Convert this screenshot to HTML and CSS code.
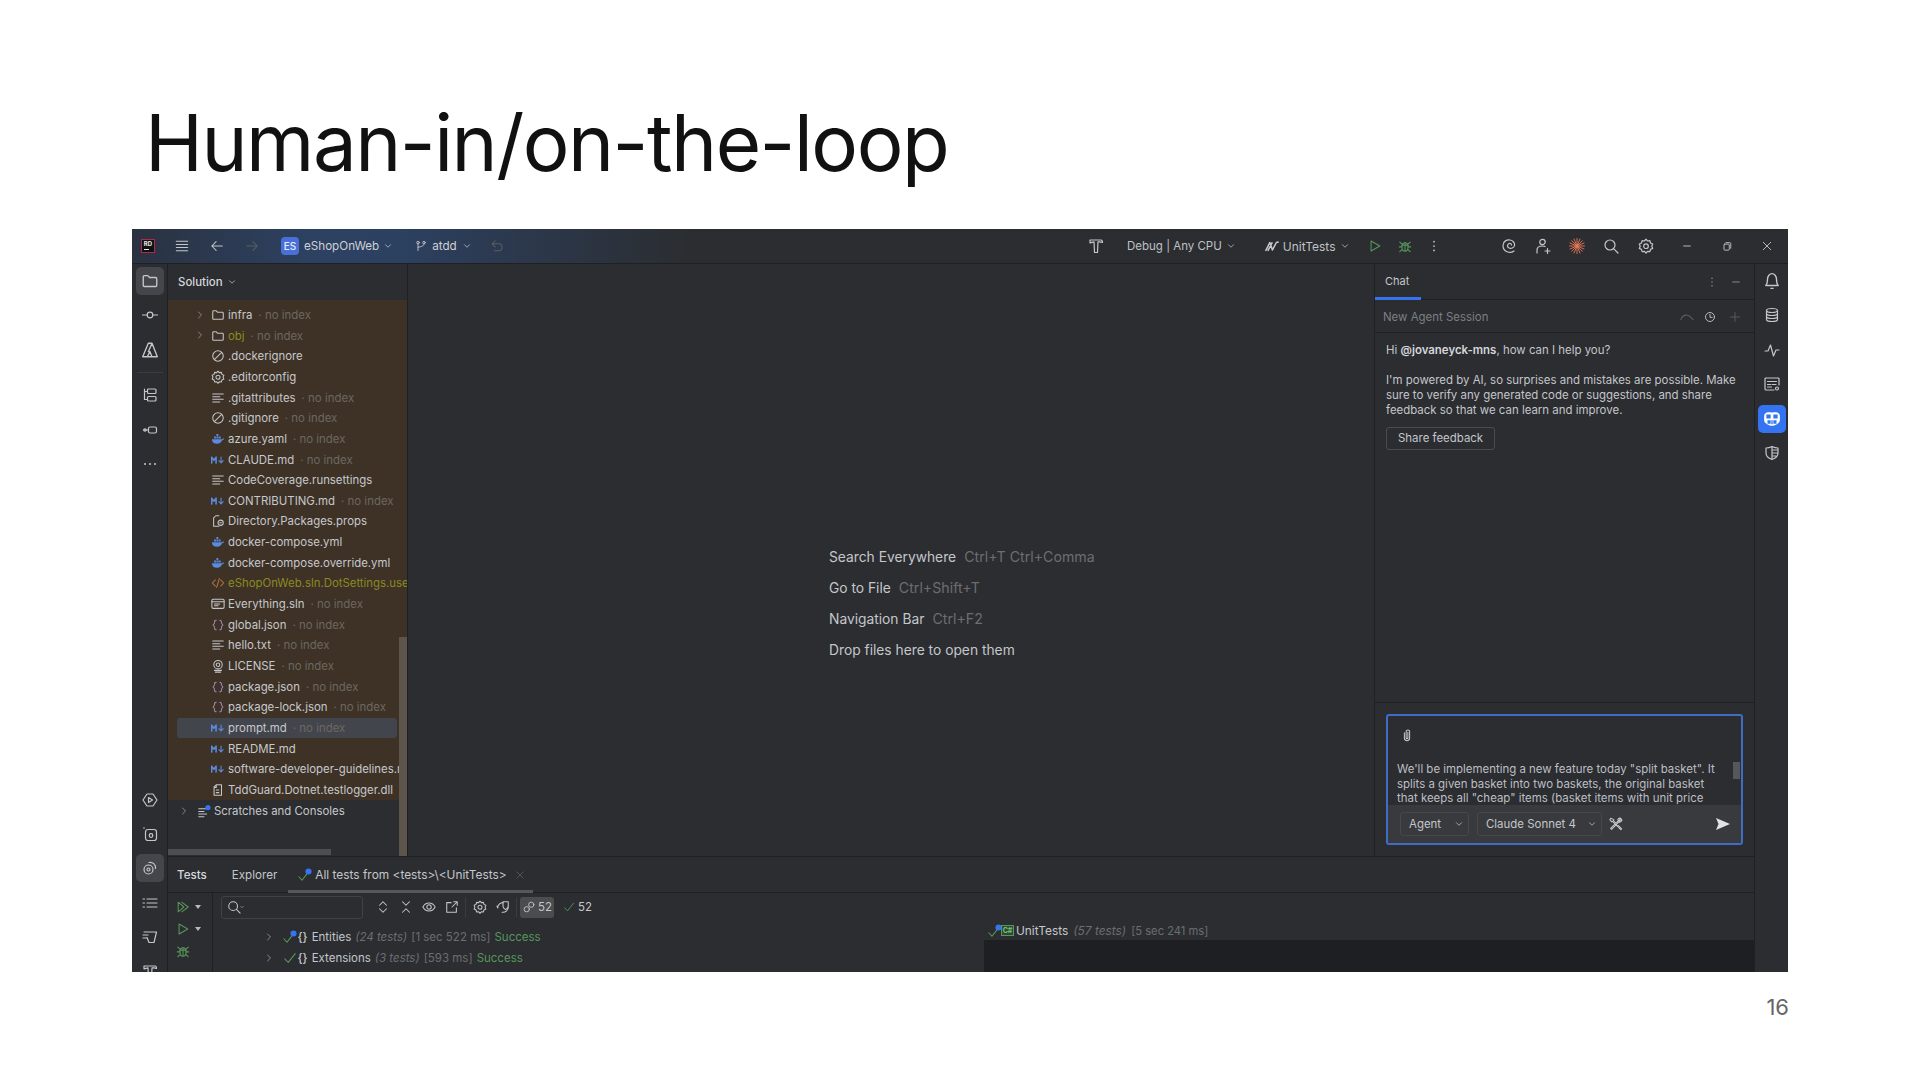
FILE: index.html
```html
<!DOCTYPE html>
<html lang="en">
<head>
<meta charset="utf-8">
<title>Human-in/on-the-loop</title>
<link rel="stylesheet" href="styles.css">
</head>
<body>
<svg class="defs" width="0" height="0" aria-hidden="true">
  <symbol id="folder" viewBox="0 0 16 16"><path d="M2 4.200q0-1 1-1h3l1.600 1.700H13q1 0 1 1v6q0 1-1 1H3q-1 0-1-1z"/></symbol>
  <symbol id="chev-r" viewBox="0 0 16 16"><path d="M6 4l4 4-4 4"/></symbol>
  <symbol id="chev-d" viewBox="0 0 16 16"><path d="M4 6l4 4 4-4"/></symbol>
  <symbol id="ban" viewBox="0 0 16 16"><circle cx="8" cy="8" r="6"/><path d="M3.800 12.200l8.400-8.400"/></symbol>
  <symbol id="gear" viewBox="0 0 16 16"><path d="M8 1.200l1.500 1.800 2.400-.3.600 2.300 2.200 1-.9 2.200.9 2.200-2.200 1-.6 2.300-2.400-.3L8 15.200l-1.500-1.800-2.400.3-.6-2.300-2.200-1 .9-2.200-.9-2.200 2.200-1 .6-2.300 2.400.3z"/><circle cx="8" cy="8.200" r="2.300"/></symbol>
  <symbol id="lines" viewBox="0 0 16 16"><path d="M2 3.500h12M2 6.500h8M2 9.500h12M2 12.500h8"/></symbol>
  <symbol id="lines-b" viewBox="0 0 16 16"><path d="M2 5.500h9M2 8.500h6M2 11.500h9M2 14.500h6"/><circle class="dot" cx="12.500" cy="4" r="3"/></symbol>
  <symbol id="docker" viewBox="0 0 16 16"><path class="solid" d="M1 8.200h11.600c.5-.9 1.400-1 2.400-.8-.4 1.500-1.400 2.100-2.400 2.100-.8 2.600-2.800 4-5.600 4-3.800 0-5.800-2-6-5.300z"/><path class="solid" d="M3.500 5.200h2.200v2.300H3.500zM6.200 5.200h2.200v2.300H6.200zM6.200 2.400h2.200v2.300H6.200zM8.900 5.200h2.200v2.300H8.900z"/></symbol>
  <symbol id="md" viewBox="0 0 16 16"><path class="thick" d="M.8 11.500V4.800l2.500 3.400 2.500-3.400v6.700"/><path d="M11.500 4.500v6.800M9 8.800l2.500 2.600L14 8.800"/></symbol>
  <symbol id="props" viewBox="0 0 16 16"><path d="M9 2H5.500L3 4.500V14h6"/><circle cx="11" cy="10" r="3"/><path d="M10 10h2"/></symbol>
  <symbol id="xml" viewBox="0 0 16 16"><path d="M5 4.500L1.500 8 5 11.500M11 4.500L14.500 8 11 11.500M9.500 3l-3 10"/></symbol>
  <symbol id="sln" viewBox="0 0 16 16"><rect x="1" y="2.500" width="14" height="10.500" rx="1.500"/><path d="M1 5.500h14M4 8h6M4 10h4"/></symbol>
  <symbol id="json" viewBox="0 0 16 16"><path d="M6 2.500c-2 0-2 1-2 2.500 0 1.500-1 2-1.500 3 .5 1 1.500 1.500 1.500 3s0 2.500 2 2.500M10 2.500c2 0 2 1 2 2.500 0 1.500 1 2 1.500 3-.5 1-1.500 1.500-1.500 3s0 2.500-2 2.500"/></symbol>
  <symbol id="license" viewBox="0 0 16 16"><circle cx="8" cy="6.500" r="4.800"/><circle cx="8" cy="6.500" r="2"/><path d="M4 13h8M5 15h6"/></symbol>
  <symbol id="dll" viewBox="0 0 16 16"><path d="M6 2h6v12H3.500V4.500zM6 2v3H3.500M6 8h3M6 11h3"/></symbol>
  <symbol id="commit" viewBox="0 0 16 16"><circle cx="8" cy="8" r="2.800"/><path d="M.5 8h4.700M10.800 8h4.700"/></symbol>
  <symbol id="azure" viewBox="0 0 16 16"><path d="M6.500 2h3.300l4.700 12H9.700L8 9.500 5.500 14H1.500zM9.800 2L6.500 9.500h1.500M5.500 14h9"/></symbol>
  <symbol id="struct" viewBox="0 0 16 16"><rect x="5.500" y="2" width="8.500" height="4.500" rx="1"/><rect x="5.500" y="9.500" width="8.500" height="4.500" rx="1"/><path d="M2.500 2v10.500h3M2.500 4.500h3"/></symbol>
  <symbol id="plug" viewBox="0 0 16 16"><rect x="6.500" y="5" width="8" height="6" rx="1.500"/><path d="M1.500 8h5"/><circle cx="3" cy="8" r="1.200"/></symbol>
  <symbol id="dots" viewBox="0 0 16 16"><circle class="solid" cx="3" cy="8" r="1"/><circle class="solid" cx="8" cy="8" r="1"/><circle class="solid" cx="13" cy="8" r="1"/></symbol>
  <symbol id="vdots" viewBox="0 0 16 16"><circle class="solid" cx="8" cy="3" r="1"/><circle class="solid" cx="8" cy="8" r="1"/><circle class="solid" cx="8" cy="13" r="1"/></symbol>
  <symbol id="hexrun" viewBox="0 0 16 16"><path d="M5 2h6l4 6-4 6H5L1 8z"/><path d="M6.500 5.500l4 2.500-4 2.500z"/></symbol>
  <symbol id="cam" viewBox="0 0 16 16"><rect x="3.500" y="3.500" width="11" height="11" rx="2.500"/><circle cx="9" cy="9.500" r="1.800"/><circle class="solid" cx="2" cy="2" r=".8"/></symbol>
  <symbol id="svc" viewBox="0 0 16 16"><circle cx="6.500" cy="9.500" r="4.500"/><circle cx="6.500" cy="9.500" r="1.500"/><path d="M7 2.500c3.500-1 7 2 6.500 6"/></symbol>
  <symbol id="list" viewBox="0 0 16 16"><path d="M5 4h10M5 8h10M5 12h10M1 4h1.500M1 8h1.500M1 12h1.500"/></symbol>
  <symbol id="todo" viewBox="0 0 16 16"><path d="M2 3h12.500l-2.500 10.500H7L5 8.500M1 6h5M1 9h3"/></symbol>
  <symbol id="hammer" viewBox="0 0 16 16"><path d="M2 2h11c1 0 1.500 1 1.500 2.500L12 3.800H10l-.5 10.700h-3L6 3.800 2 4.800z"/></symbol>
  <symbol id="menu" viewBox="0 0 16 16"><path d="M1.500 2.500h13M1.500 6.200h13M1.500 9.800h13M1.500 13.500h13"/></symbol>
  <symbol id="left" viewBox="0 0 16 16"><path d="M14 8H2.500M7 3L2 8l5 5"/></symbol>
  <symbol id="right" viewBox="0 0 16 16"><path d="M2 8h11.500M9 3l5 5-5 5"/></symbol>
  <symbol id="branch" viewBox="0 0 16 16"><circle cx="4" cy="3.500" r="1.700"/><circle cx="12" cy="3.500" r="1.700"/><path d="M4 5.200V14M12 5.200c0 3-3 3.500-8 4.500"/></symbol>
  <symbol id="undo" viewBox="0 0 16 16"><path d="M6 2L2.500 5.500 6 9M2.500 5.500H10c5 0 5 8 0 8H5"/></symbol>
  <symbol id="play" viewBox="0 0 16 16"><path d="M3.500 2.200L13.500 8l-10 5.800z"/></symbol>
  <symbol id="bug" viewBox="0 0 16 16"><ellipse cx="8" cy="9" rx="3.500" ry="4.800"/><path d="M4.500 7h7M1.500 9h3M11.500 9h3M2 3.500l3 2.500M14 3.500l-3 2.500M2 14.500l3-2.500M14 14.500l-3-2.500M8 4V14"/></symbol>
  <symbol id="spiral" viewBox="0 0 16 16"><path d="M13 13c-4 3-11 1-11-5.500C2 3 6 1.500 9 2c3 .5 5 3 4.500 5.500C13 10 10 11 8 10c-2-1-2-3.500 0-4.500 1.500-.5 2.500.5 2.500 1.500"/></symbol>
  <symbol id="person" viewBox="0 0 16 16"><circle cx="7.500" cy="4" r="2.700"/><path d="M2 15v-3c0-3 3-4 5.500-4 1 0 2 .2 2.500.5M12.500 10.500v5M10 13h5"/></symbol>
  <symbol id="star" viewBox="0 0 16 16"><path class="orange" d="M8 .5v15M.5 8h15M2.700 2.700l10.600 10.600M13.300 2.700L2.700 13.300M5 1l6 14M11 1L5 15M1 5l14 6M15 5L1 11"/></symbol>
  <symbol id="search" viewBox="0 0 16 16"><circle cx="7" cy="7" r="5"/><path d="M10.800 10.800L15 15"/></symbol>
  <symbol id="min" viewBox="0 0 16 16"><path d="M3.500 8h9"/></symbol>
  <symbol id="restore" viewBox="0 0 16 16"><rect x="4" y="5.500" width="7" height="8" rx="1"/><path d="M6.500 3.500h5q1.500 0 1.500 1.500v6"/></symbol>
  <symbol id="close" viewBox="0 0 16 16"><path d="M3 3l10 10M13 3L3 13"/></symbol>
  <symbol id="bell" viewBox="0 0 16 16"><path d="M2.500 12c1.500-1.500 1.500-3 1.500-5.500C4 3.500 6 1.500 8 1.500s4 2 4 5c0 2.500 0 4 1.500 5.500zM7 14.500h2"/></symbol>
  <symbol id="db" viewBox="0 0 16 16"><ellipse cx="8" cy="3.500" rx="5.500" ry="2"/><path d="M2.500 3.500v9c0 1.200 2.500 2 5.500 2s5.500-.8 5.500-2v-9M2.500 6.500c0 1.200 2.500 2 5.500 2s5.500-.8 5.500-2M2.500 9.500c0 1.200 2.500 2 5.500 2s5.500-.8 5.500-2"/></symbol>
  <symbol id="pulse" viewBox="0 0 16 16"><path d="M1 9h3l2.500-6 3 11L12 8h3"/></symbol>
  <symbol id="code" viewBox="0 0 16 16"><path d="M15 9V3q0-1-1-1H2q-1 0-1 1v10q0 1 1 1h8M3.500 5.500h9M3.500 8.500h3M8 8.500h4M3.500 11h4"/><circle cx="13" cy="12.500" r="1.500"/></symbol>
  <symbol id="copilot" viewBox="0 0 16 16"><path class="white" d="M4.500 2h2.500c.5 0 1 .5 1 1 0-.5.500-1 1-1h2.500C13.500 2 15 3.500 15 5.500v3.700c0 1-.5 2-1.800 2.800C11.500 13.500 9.500 14 8 14s-3.500-.5-5.200-2C1.500 11.200 1 10.200 1 9.200V5.500C1 3.500 2.500 2 4.500 2z"/><path class="hole" d="M3 4h3.800v3.500H3zM9.200 4H13v3.500H9.200zM4 9.200h2.800v3H4zM9.200 9.200H12v3H9.200zM7.400 9.200h1.200v3.500H7.400z"/></symbol>
  <symbol id="shield" viewBox="0 0 16 16"><path d="M8 1.500c2 1 4 1.500 6 1.500v5c0 3.500-3 5.500-6 6.500-3-1-6-3-6-6.500V3c2 0 4-.5 6-1.500zM8 1.500v13M8 5h6M8 8h5.800M8 11h4"/></symbol>
  <symbol id="wave" viewBox="0 0 16 16"><path class="thick" d="M1 13L5.500 4l3 8.500L13 4l2-.5M3.500 13L8 4.500"/></symbol>
  <symbol id="clock" viewBox="0 0 16 16"><circle cx="8" cy="8" r="6"/><path d="M8 4.500V8.500h3"/></symbol>
  <symbol id="plus" viewBox="0 0 16 16"><path d="M8 2v12M2 8h12"/></symbol>
  <symbol id="redo" viewBox="0 0 16 16"><path d="M1 11c2-6 8-7 12-2l2 2"/></symbol>
  <symbol id="clip" viewBox="0 0 16 16"><path d="M5 5.500V11.500c0 4 6 4 6 0V4.500c0-3-4-3-4 0v7c0 1 2 1 2 0V5"/></symbol>
  <symbol id="tools" viewBox="0 0 16 16"><path d="M2 1.500L1 3l2 2.500L4 5l9.500 9.500 1-1L5 4l.5-1zM14.500 2.500L12 5l-1-1 2.500-2.500c-2-.8-4 1-3.200 3.200L1.800 13l1.200 1.200 8.300-8.500c2.200.8 4-1.200 3.200-3.200z"/></symbol>
  <symbol id="send" viewBox="0 0 16 16"><path class="light" d="M1 2l14 6-14 6 2.500-6z"/></symbol>
  <symbol id="dplay" viewBox="0 0 16 16"><path d="M2.500 2.500L9 8l-6.500 5.500zM6.500 2.500L14 8l-7.500 5.500"/></symbol>
  <symbol id="updown" viewBox="0 0 16 16"><path d="M4 6l4-4 4 4M4 10l4 4 4-4"/></symbol>
  <symbol id="collapse" viewBox="0 0 16 16"><path d="M4 2l4 4 4-4M4 14l4-4 4 4"/></symbol>
  <symbol id="eye" viewBox="0 0 16 16"><path d="M1 8c3-6 11-6 14 0-3 6-11 6-14 0z"/><circle cx="8" cy="8" r="2.500"/></symbol>
  <symbol id="export" viewBox="0 0 16 16"><path d="M7 3H2v11h11V9M8 8l6-6M10 2h4v4"/></symbol>
  <symbol id="hist" viewBox="0 0 16 16"><path d="M2 9a6 6 0 0 1 6-6M2 9l-1-2M14 8a6 6 0 0 1-7 6"/><path d="M8 2h6v5c0 2-1.500 3-3 4-1.500-1-3-2-3-4z"/></symbol>
  <symbol id="check" viewBox="0 0 16 16"><path d="M2 9l4 4 8-10"/></symbol>
  <symbol id="check-b" viewBox="0 0 16 16"><path d="M1 10l3.500 4L10 7"/><circle class="dot" cx="12" cy="4" r="3.500"/></symbol>
  <symbol id="link" viewBox="0 0 16 16"><circle cx="5" cy="11" r="3.500"/><circle cx="11" cy="5" r="3.500"/></symbol>
</svg>

<div class="slide">
  <header class="title-area"><h1 class="title">Human-in/on-the-loop</h1></header>

  <div class="ide">
    <div class="titlebar">
      <div class="tb-left">
        <span class="rd-logo">RD<i></i></span>
        <svg class="ic i14 c-main tb-menu"><use href="#menu"/></svg>
        <svg class="ic i14 c-main"><use href="#left"/></svg>
        <svg class="ic i14 c-off"><use href="#right"/></svg>
        <span class="proj"><b class="es">ES</b>eShopOnWeb<svg class="ic i10 c-main"><use href="#chev-d"/></svg></span>
        <span class="branch"><svg class="ic i12 c-main"><use href="#branch"/></svg>atdd<svg class="ic i10 c-main"><use href="#chev-d"/></svg></span>
        <svg class="ic i14 c-off tb-undo"><use href="#undo"/></svg>
      </div>
      <div class="tb-right">
        <svg class="ic i16 c-main"><use href="#hammer"/></svg>
        <span class="tb-debug">Debug | Any CPU<svg class="ic i10 c-main"><use href="#chev-d"/></svg></span>
        <span class="tb-run"><svg class="ic i14 c-main"><use href="#wave"/></svg>UnitTests<svg class="ic i10 c-main"><use href="#chev-d"/></svg></span>
        <svg class="ic i14 c-green tb-play"><use href="#play"/></svg>
        <svg class="ic i14 c-green tb-bug"><use href="#bug"/></svg>
        <svg class="ic i14 c-main tb-dots"><use href="#vdots"/></svg>
        <svg class="ic i16 c-main tb-spiral"><use href="#spiral"/></svg>
        <svg class="ic i16 c-main tb-gap"><use href="#person"/></svg>
        <svg class="ic i16 tb-gap"><use href="#star"/></svg>
        <svg class="ic i16 c-main tb-gap"><use href="#search"/></svg>
        <svg class="ic i16 c-main tb-gear"><use href="#gear"/></svg>
        <svg class="ic i12 c-main tb-min"><use href="#min"/></svg>
        <svg class="ic i12 c-main tb-res"><use href="#restore"/></svg>
        <svg class="ic i12 c-main tb-res"><use href="#close"/></svg>
      </div>
    </div>

    <div class="ide-body">
      <nav class="stripe">
        <div class="st-group">
          <span class="st-btn on"><svg class="ic i18 c-main"><use href="#folder"/></svg></span>
          <span class="st-btn"><svg class="ic i16 c-main"><use href="#commit"/></svg></span>
          <span class="st-btn"><svg class="ic i18 c-main"><use href="#azure"/></svg></span>
          <hr class="st-sep">
          <span class="st-btn"><svg class="ic i16 c-main"><use href="#struct"/></svg></span>
          <span class="st-btn"><svg class="ic i16 c-main"><use href="#plug"/></svg></span>
          <span class="st-btn"><svg class="ic i16 c-main"><use href="#dots"/></svg></span>
        </div>
        <div class="st-group st-bottom">
          <span class="st-btn"><svg class="ic i16 c-main"><use href="#hexrun"/></svg></span>
          <span class="st-btn"><svg class="ic i16 c-main"><use href="#cam"/></svg></span>
          <span class="st-btn on"><svg class="ic i16 c-main"><use href="#svc"/></svg></span>
          <span class="st-btn"><svg class="ic i16 c-main"><use href="#list"/></svg></span>
          <span class="st-btn"><svg class="ic i16 c-main"><use href="#todo"/></svg></span>
          <span class="st-btn"><svg class="ic i16 c-main"><use href="#hammer"/></svg></span>
        </div>
      </nav>

      <div class="center">
        <div class="upper">
          <aside class="project">
            <div class="proj-head">Solution<svg class="ic i10 c-main"><use href="#chev-d"/></svg></div>
            <div class="tree-wrap">
              <div class="tree">
                <div class="row"><svg class="ic i12 c-dim tw"><use href="#chev-r"/></svg><svg class="ic i14 c-main"><use href="#folder"/></svg><span>infra</span><em>· no index</em></div>
                <div class="row"><svg class="ic i12 c-dim tw"><use href="#chev-r"/></svg><svg class="ic i14 c-main"><use href="#folder"/></svg><span class="ign">obj</span><em>· no index</em></div>
                <div class="row"><svg class="ic i14 c-main"><use href="#ban"/></svg><span>.dockerignore</span></div>
                <div class="row"><svg class="ic i14 c-main"><use href="#gear"/></svg><span>.editorconfig</span></div>
                <div class="row"><svg class="ic i14 c-main"><use href="#lines"/></svg><span>.gitattributes</span><em>· no index</em></div>
                <div class="row"><svg class="ic i14 c-main"><use href="#ban"/></svg><span>.gitignore</span><em>· no index</em></div>
                <div class="row"><svg class="ic i14 c-blue"><use href="#docker"/></svg><span>azure.yaml</span><em>· no index</em></div>
                <div class="row"><svg class="ic i14 c-blue"><use href="#md"/></svg><span>CLAUDE.md</span><em>· no index</em></div>
                <div class="row"><svg class="ic i14 c-main"><use href="#lines"/></svg><span>CodeCoverage.runsettings</span></div>
                <div class="row"><svg class="ic i14 c-blue"><use href="#md"/></svg><span>CONTRIBUTING.md</span><em>· no index</em></div>
                <div class="row"><svg class="ic i14 c-main"><use href="#props"/></svg><span>Directory.Packages.props</span></div>
                <div class="row"><svg class="ic i14 c-blue"><use href="#docker"/></svg><span>docker-compose.yml</span></div>
                <div class="row"><svg class="ic i14 c-blue"><use href="#docker"/></svg><span>docker-compose.override.yml</span></div>
                <div class="row"><svg class="ic i14 c-orange"><use href="#xml"/></svg><span class="ign">eShopOnWeb.sln.DotSettings.user</span></div>
                <div class="row"><svg class="ic i14 c-main"><use href="#sln"/></svg><span>Everything.sln</span><em>· no index</em></div>
                <div class="row"><svg class="ic i14 c-purple"><use href="#json"/></svg><span>global.json</span><em>· no index</em></div>
                <div class="row"><svg class="ic i14 c-main"><use href="#lines"/></svg><span>hello.txt</span><em>· no index</em></div>
                <div class="row"><svg class="ic i14 c-main"><use href="#license"/></svg><span>LICENSE</span><em>· no index</em></div>
                <div class="row"><svg class="ic i14 c-purple"><use href="#json"/></svg><span>package.json</span><em>· no index</em></div>
                <div class="row"><svg class="ic i14 c-purple"><use href="#json"/></svg><span>package-lock.json</span><em>· no index</em></div>
                <div class="row sel"><svg class="ic i14 c-blue"><use href="#md"/></svg><span>prompt.md</span><em>· no index</em></div>
                <div class="row"><svg class="ic i14 c-blue"><use href="#md"/></svg><span>README.md</span></div>
                <div class="row"><svg class="ic i14 c-blue"><use href="#md"/></svg><span>software-developer-guidelines.md</span></div>
                <div class="row"><svg class="ic i14 c-main"><use href="#dll"/></svg><span>TddGuard.Dotnet.testlogger.dll</span></div>
              </div>
              <div class="row scratch"><svg class="ic i12 c-dim tw"><use href="#chev-r"/></svg><svg class="ic i14 c-main"><use href="#lines-b"/></svg><span>Scratches and Consoles</span></div>
              <i class="sb-v"></i>
              <i class="sb-h"></i>
            </div>
          </aside>

          <main class="editor">
            <div class="hints">
              <p>Search Everywhere<kbd>Ctrl+T Ctrl+Comma</kbd></p>
              <p>Go to File<kbd>Ctrl+Shift+T</kbd></p>
              <p>Navigation Bar<kbd>Ctrl+F2</kbd></p>
              <p>Drop files here to open them</p>
            </div>
          </main>

          <section class="chat">
            <div class="chat-tabs">
              <span class="chat-tab">Chat</span>
              <span class="chat-tools"><svg class="ic i12 c-dim"><use href="#vdots"/></svg><svg class="ic i12 c-dim"><use href="#min"/></svg></span>
            </div>
            <div class="session">
              <span>New Agent Session</span>
              <span class="sess-tools"><svg class="ic i14 c-off"><use href="#redo"/></svg><svg class="ic i12 c-main"><use href="#clock"/></svg><svg class="ic i12 c-off"><use href="#plus"/></svg></span>
            </div>
            <div class="chat-msgs">
              <p class="hi">Hi <b>@jovaneyck-mns</b>, how can I help you?</p>
              <p class="intro">I'm powered by AI, so surprises and mistakes are possible. Make sure to verify any generated code or suggestions, and share feedback so that we can learn and improve.</p>
              <span class="fb-btn">Share feedback</span>
            </div>
            <div class="composer-wrap">
              <div class="composer">
                <div class="comp-clip"><svg class="ic i14 c-main"><use href="#clip"/></svg></div>
                <div class="comp-text">We'll be implementing a new feature today "split basket". It splits a given basket into two baskets, the original basket that keeps all "cheap" items (basket items with unit price<i class="comp-sb"></i></div>
                <div class="comp-bar">
                  <span class="pill p-agent">Agent<svg class="ic i10 c-main"><use href="#chev-d"/></svg></span>
                  <span class="pill p-model">Claude Sonnet 4<svg class="ic i10 c-main"><use href="#chev-d"/></svg></span>
                  <svg class="ic i14 c-main"><use href="#tools"/></svg>
                  <svg class="ic i16 send"><use href="#send"/></svg>
                </div>
              </div>
            </div>
          </section>
        </div>

        <div class="tests">
          <div class="test-tabs">
            <span class="tt-title">Tests</span>
            <span class="tt-ex">Explorer</span>
            <span class="tt-all"><svg class="ic i14 c-green"><use href="#check-b"/></svg>All tests from &lt;tests&gt;\&lt;UnitTests&gt;<svg class="ic i10 c-off tt-x"><use href="#close"/></svg></span>
          </div>
          <div class="test-main">
            <div class="test-side">
              <span class="ts-btn"><svg class="ic i14 c-green"><use href="#dplay"/></svg><u></u></span>
              <span class="ts-btn"><svg class="ic i14 c-green"><use href="#play"/></svg><u></u></span>
              <span class="ts-btn"><svg class="ic i14 c-green"><use href="#bug"/></svg></span>
            </div>
            <div class="test-tree">
              <div class="test-bar">
                <span class="t-search"><svg class="ic i14 c-main"><use href="#search"/></svg><svg class="ic i10 c-main"><use href="#chev-d"/></svg></span>
                <svg class="ic i14 c-main"><use href="#updown"/></svg>
                <svg class="ic i14 c-main"><use href="#collapse"/></svg>
                <svg class="ic i14 c-main"><use href="#eye"/></svg>
                <svg class="ic i14 c-main"><use href="#export"/></svg>
                <i class="t-sep"></i>
                <svg class="ic i14 c-main"><use href="#gear"/></svg>
                <svg class="ic i14 c-main"><use href="#hist"/></svg>
                <i class="t-sep"></i>
                <span class="badge"><svg class="ic i12 c-main"><use href="#link"/></svg>52</span>
                <span class="passed"><svg class="ic i12 c-green"><use href="#check"/></svg>52</span>
              </div>
              <div class="t-row"><svg class="ic i12 c-dim t-tw"><use href="#chev-r"/></svg><svg class="ic i14 c-green"><use href="#check-b"/></svg><b class="ns">{}</b><span>Entities</span><em>(24 tests)</em><s>[1 sec 522 ms]</s><strong>Success</strong></div>
              <div class="t-row"><svg class="ic i12 c-dim t-tw"><use href="#chev-r"/></svg><svg class="ic i14 c-green"><use href="#check"/></svg><b class="ns">{}</b><span>Extensions</span><em>(3 tests)</em><s>[593 ms]</s><strong>Success</strong></div>
            </div>
            <div class="test-out">
              <div class="out-head"><svg class="ic i14 c-green"><use href="#check-b"/></svg><b class="cs">C#</b><span>UnitTests</span><em>(57 tests)</em><s>[5 sec 241 ms]</s></div>
              <div class="out-body"></div>
            </div>
          </div>
        </div>
      </div>

      <nav class="stripe stripe-r">
        <span class="st-btn"><svg class="ic i18 c-main"><use href="#bell"/></svg></span>
        <span class="st-btn"><svg class="ic i16 c-main"><use href="#db"/></svg></span>
        <span class="st-btn"><svg class="ic i16 c-main"><use href="#pulse"/></svg></span>
        <span class="st-btn"><svg class="ic i16 c-main"><use href="#code"/></svg></span>
        <span class="st-btn blue"><svg class="ic i18"><use href="#copilot"/></svg></span>
        <span class="st-btn"><svg class="ic i16 c-main"><use href="#shield"/></svg></span>
      </nav>
    </div>
  </div>

  <footer class="page-no">16</footer>
</div>
</body>
</html>
```
FILE: styles.css
```css
* { box-sizing: border-box; }
html, body { margin: 0; padding: 0; background: #fff; }
.defs { position: absolute; }
.slide { width: 1920px; height: 1080px; overflow: hidden; display: flex; flex-direction: column; font-family: Inter, "Noto Sans", sans-serif; }

.title-area { height: 229px; padding: 93px 0 0 145px; }
.title { margin: 0; font-family: Inter, sans-serif; font-weight: 400; font-size: 78px; line-height: 100px; letter-spacing: -1.5px; color: #111; }

.page-no { padding: 23px 131px 0 0; text-align: right; font-size: 22px; line-height: 24px; color: #666; }

.ic { display: block; flex: none; fill: none; stroke: currentColor; stroke-width: 1.2; stroke-linecap: round; stroke-linejoin: round; }
.i10 { width: 10px; height: 10px; }
.i12 { width: 12px; height: 12px; }
.i14 { width: 14px; height: 14px; }
.i16 { width: 16px; height: 16px; }
.i18 { width: 18px; height: 18px; }
.c-main { color: #c4c6cb; }
.c-dim { color: #8f9196; }
.c-off { color: #5b5d62; }
.c-green { color: #57965c; }
.c-blue { color: #5b8be0; }
.c-orange { color: #b5743f; }
.c-purple { color: #9b85b0; }
.solid { fill: currentColor; stroke: none; }
.dot { fill: #3574f0; stroke: none; }
.thick { stroke-width: 1.8; }
.orange { stroke: #e9785a; stroke-width: .9; }
.white { fill: #fff; stroke: none; }
.hole { fill: #3574f0; stroke: none; }
.light { fill: #e0e2e6; stroke: none; }

.ide { width: 1656px; height: 743px; margin-left: 132px; flex: none; display: flex; flex-direction: column; background: #2b2d30; color: #c4c6cb; font-size: 11.450px; overflow: hidden; }

.titlebar { height: 35px; flex: none; display: flex; justify-content: space-between; align-items: center; background: linear-gradient(90deg, #2a3240 0, #2d4263 190px, #2c4060 270px, #2b2d30 560px); border-bottom: 1px solid #1f2023; }
.tb-left, .tb-right { display: flex; align-items: center; }
.tb-left { padding-left: 9px; }
.tb-left > svg { margin-left: 21px; }
.tb-left > .tb-menu { margin-left: 20px; }
.rd-logo { width: 14px; height: 14px; background: #111; border: 1px solid #b02a50; color: #eee; font-size: 6px; font-weight: 700; line-height: 7px; text-align: center; display: block; position: relative; }
.rd-logo i { position: absolute; left: 2px; bottom: 2px; width: 5px; height: 1px; background: #eee; }
.proj, .branch { display: flex; align-items: center; color: #ced0d5; font-size: 11.650px; }
.proj { margin-left: 22px; gap: 4px; }
.es { width: 18px; height: 18px; border-radius: 4px; background: #4a6fd8; color: #e8ecff; font-size: 10px; font-weight: 500; display: flex; align-items: center; justify-content: center; margin-right: 1px; }
.branch { margin-left: 22px; gap: 5px; }
.tb-left > .tb-undo { margin-left: 18px; }
.tb-right { padding-right: 15px; }
.tb-debug, .tb-run { display: flex; align-items: center; gap: 4px; color: #bfc1c6; }
.tb-debug { margin-left: 23px; font-size: 11.500px; }
.tb-run { margin-left: 29px; gap: 4px; font-size: 12px; }
.tb-play { margin-left: 18px; }
.tb-bug { margin-left: 16px; }
.tb-dots { margin-left: 15.500px; }
.tb-spiral { margin-left: 60px; }
.tb-gap { margin-left: 18px; }
.tb-gear { margin-left: 19px; }
.tb-min { margin-left: 27px; }
.tb-res { margin-left: 28px; }

.ide-body { flex: 1; min-height: 0; display: flex; }
.stripe { width: 36px; flex: none; display: flex; flex-direction: column; align-items: center; justify-content: space-between; padding-top: 3px; border-right: 1px solid #1f2023; }
.st-group { display: flex; flex-direction: column; align-items: center; }
.st-bottom { gap: 0; margin-bottom: -20px; }
.st-btn { width: 28px; height: 28px; margin-bottom: 6.400px; border-radius: 5px; display: flex; align-items: center; justify-content: center; }
.st-btn.on { background: #44464b; }
.st-btn.blue { background: #3574f0; }
.st-sep { width: 26px; margin: 2px 0 8px; border: 0; border-top: 1px solid #3a3c40; }
.stripe-r { width: 34px; justify-content: flex-start; border-right: 0; border-left: 1px solid #1f2023; }

.center { flex: 1; min-width: 0; display: flex; flex-direction: column; }
.upper { height: 593px; flex: none; display: flex; border-bottom: 1px solid #1f2023; }

.project { width: 240px; flex: none; display: flex; flex-direction: column; border-right: 1px solid #1f2023; }
.proj-head { height: 36px; flex: none; display: flex; align-items: center; gap: 4px; padding-left: 10px; font-weight: 500; color: #d5d7dc; }
.tree-wrap { flex: 1; min-height: 0; position: relative; overflow: hidden; }
.tree { background: #3e3226; padding: 4.600px 0 0; height: 500px; }
.row { height: 20.670px; display: flex; align-items: center; padding-left: 43px; white-space: nowrap; gap: 3px; position: relative; }
.row .tw { position: absolute; left: 26px; top: 4px; }
.row span { color: #c6c8cc; font-size: 11.400px; }
.row span.ign { color: #8a8a22; }
.row em { font-style: normal; color: #6b6860; margin-left: 3px; }
.row.sel { background: #43454c; margin: 0 10px 0 9px; padding-left: 34px; border-radius: 3px; }
.row.scratch { padding-left: 29px; margin-top: 1px; }
.row.scratch .tw { left: 10px; }
.sb-v { position: absolute; right: 0; bottom: 0; width: 8px; height: 219px; background: #5d554b; }
.sb-h { position: absolute; left: 0; bottom: 1px; width: 163px; height: 6px; background: #4d4e52; }

.editor { flex: 1; min-width: 0; display: flex; padding: 283px 0 0 421px; }
.hints { font-size: 13.800px; color: #c4c6cb; }
.hints p { margin: 0; height: 31px; line-height: 20px; white-space: nowrap; }
.hints kbd { font: inherit; font-size: 14.200px; color: #6b6d72; margin-left: 8px; }

.chat { width: 380px; flex: none; display: flex; flex-direction: column; border-left: 1px solid #1f2023; }
.chat-tabs { height: 36px; flex: none; display: flex; justify-content: space-between; border-bottom: 1px solid #1f2023; }
.chat-tab { padding: 0 10px; width: 46px; line-height: 35px; font-size: 11px; white-space: nowrap; border-bottom: 3px solid #3574f0; height: 36px; }
.chat-tools { display: flex; align-items: center; gap: 12px; padding-right: 12px; }
.session { height: 33px; flex: none; display: flex; align-items: center; justify-content: space-between; padding: 2px 13px 0 8px; color: #7d7f84; border-bottom: 1px solid #1f2023; }
.sess-tools { display: flex; align-items: center; gap: 10px; }
.sess-tools svg + svg + svg { margin-left: 3px; }
.chat-msgs { flex: 1; padding: 10px 11px 0; line-height: 14.670px; border-bottom: 1px solid #1f2023; }
.chat-msgs p { margin: 0; }
.hi b { font-weight: 600; color: #d5d7dc; }
.intro { margin-top: 15.500px !important; }
.fb-btn { display: inline-block; margin-top: 10px; padding: 0 11px; height: 23px; line-height: 21px; border: 1px solid #4a4c50; border-radius: 3px; }
.composer-wrap { height: 153px; flex: none; padding: 11px 11px 11px 11px; }
.composer { height: 131px; border: 2px solid #3f6cc7; border-radius: 3px; display: flex; flex-direction: column; overflow: hidden; }
.comp-clip { height: 46px; flex: none; padding: 12px 0 0 12px; }
.comp-text { height: 43px; flex: none; padding: 0 18px 0 9px; line-height: 14.670px; overflow: hidden; color: #bdbfc4; position: relative; }
.comp-sb { position: absolute; right: 1px; top: 0; width: 7px; height: 17px; background: #55575b; }
.comp-bar { flex: 1; background: #393a3e; display: flex; align-items: center; padding: 0 10px 0 12px; gap: 8px; }
.pill { height: 24px; display: flex; align-items: center; justify-content: space-between; padding: 0 4px 0 8px; border: 1px solid #46484c; border-radius: 3px; }
.p-agent { width: 69px; }
.p-model { width: 125px; margin-right: -1px; }
.send { margin-left: auto; }

.tests { flex: 1; min-height: 0; display: flex; flex-direction: column; }
.test-tabs { height: 36px; flex: none; display: flex; align-items: center; padding-left: 9px; border-bottom: 1px solid #1f2023; position: relative; }
.test-tabs::after { content: ""; position: absolute; left: 120px; bottom: -1px; width: 245px; height: 3px; background: #55575c; }
.tt-title { font-weight: 500; color: #d5d7dc; font-size: 11.600px; }
.tt-ex { margin-left: 25px; font-size: 11.600px; }
.tt-all { margin-left: 21px; display: flex; align-items: center; gap: 3px; font-size: 11.900px; }
.tt-x { margin-left: 5px; }
.test-main { flex: 1; min-height: 0; display: flex; overflow: hidden; }
.test-side { width: 45px; flex: none; display: flex; flex-direction: column; padding-top: 3px; border-right: 1px solid #1f2023; }
.ts-btn { height: 22px; display: flex; align-items: center; gap: 5px; padding-left: 8px; }
.ts-btn u { width: 0; height: 0; border: 3.500px solid transparent; border-top: 4px solid #b8babf; border-bottom: 0; text-decoration: none; }
.test-tree { width: 771px; flex: none; }
.test-bar { height: 33px; padding-bottom: 4.500px; display: flex; align-items: center; gap: 9px; padding-left: 8px; }
.t-search { width: 142px; height: 23px; display: flex; align-items: center; padding-left: 5px; border: 1px solid #3f4145; border-radius: 3px; margin-right: 3.500px; }
.t-search svg + svg { margin-left: -2px; width: 6px; height: 6px; }
.t-sep { width: 1px; height: 20px; background: #3a3c40; margin: 0 -2.500px; }
.badge { display: flex; align-items: center; gap: 3px; height: 21px; padding: 0 2px 0 3px; background: #4a4c50; border-radius: 3px; margin-left: -3.500px; }
.passed { display: flex; align-items: center; gap: 3px; margin-left: 0; }
.t-row { height: 21px; display: flex; align-items: center; padding-left: 50px; gap: 4px; white-space: nowrap; font-size: 11.500px; }
.t-tw { margin-right: 4px; }
.ns { font-weight: 500; color: #c6c8cc; margin-left: -3.500px; }
.t-row em, .out-head em { color: #6b6d72; font-style: italic; }
.t-row s, .out-head s { text-decoration: none; color: #6b6d72; }
.t-row strong { font-weight: 400; color: #57965c; }
.test-out { flex: 1; min-width: 0; display: flex; flex-direction: column; }
.out-head { height: 21px; flex: none; margin-top: 26px; padding-top: 2px; display: flex; align-items: center; gap: 2px; padding-left: 4px; white-space: nowrap; font-size: 11.900px; }
.out-head em { margin-left: 3px; }
.out-head s { margin-left: 3px; font-size: 11.200px; }
.cs { font-size: 7px; font-weight: 700; width: 13px; height: 11px; line-height: 10px; text-align: center; color: #79c07e; border: 1px solid #57965c; background: #2f4a33; margin-left: -3px; }
.out-body { flex: 1; background: #1e1f22; }
```
